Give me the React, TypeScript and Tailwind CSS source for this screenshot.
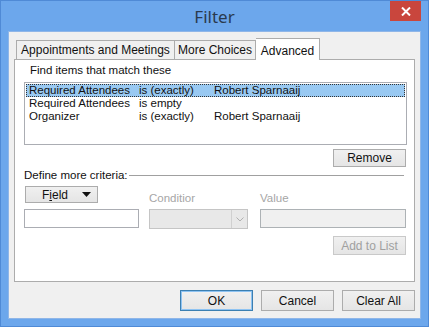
import React from "react";

const font = { fontFamily: '"Liberation Sans", Arial, sans-serif' };

function Btn({ children, className = "", disabled = false, primary = false }: { children: React.ReactNode; className?: string; disabled?: boolean; primary?: boolean }) {
  return (
    <div
      className={
        "flex items-center justify-center border bg-gradient-to-b from-[#f0f0f0] to-[#e5e5e5] text-[12px] leading-none whitespace-nowrap " +
        (primary ? "border-[#3c7fb1] shadow-[inset_0_0_0_1px_#8ec3f2] " : "border-[#acacac] ") +
        (disabled ? "text-[#a0a0a0] border-[#c9c9c9] " : "text-[#111] ") +
        className
      }
    >
      {children}
    </div>
  );
}

export default function App() {
  return (
    <div className="w-[429px] h-[327px] bg-[#6ca7ec] border border-[#4f8ad6] flex flex-col relative overflow-hidden whitespace-nowrap" style={font}>
      <div className="h-[30px] flex items-center justify-center text-[17px] text-[#2a3a4e] pt-[1px]" style={{ fontFamily: '"Noto Sans", sans-serif' }}>Filter</div>
      <div className="absolute right-[7px] top-0 w-[31px] h-[20px] bg-[#c9463d] flex items-center justify-center">
        <svg width="10" height="9" viewBox="0 0 10 9">
          <path d="M1 0.5 L9 8.5 M9 0.5 L1 8.5" stroke="white" strokeWidth="2" />
        </svg>
      </div>
      <div className="mx-[7px] mb-[7px] flex-1 bg-[#f0f0f0] border border-[#8fb6e8] flex flex-col px-[5px]">
        {/* tabs */}
        <div className="flex items-end h-[27px] pl-[2px] pt-[5px] text-[12px] text-[#111]">
          <div className="h-[19px] w-[159px] border border-b-0 border-[#acacac] bg-[#f0f0f0] flex items-center justify-center">Appointments and Meetings</div>
          <div className="h-[19px] w-[81px] border border-b-0 border-l-0 border-[#acacac] bg-[#f0f0f0] flex items-center justify-center">More Choices</div>
          <div className="h-[22px] w-[64px] border border-b-0 border-l-0 border-[#acacac] bg-white flex items-start pt-[3px] justify-center relative -mb-[1px] z-10">Advanced</div>
        </div>
        {/* panel */}
        <div className="h-[223px] bg-white border border-[#acacac] relative flex flex-col text-[11.5px] text-[#111]">
          <div className="pl-[15px] pt-[3px] h-[22px] leading-[14px]">Find items that match these</div>
          <div className="ml-[9px] w-[383px] h-[63px] border border-[#abadb3] px-[1px] pt-[1px] leading-[13px]">
            <div className="flex h-[13px] bg-[#99c9f2] border border-dotted border-[#333] items-center">
              <span className="w-[112px] pl-[2px]">Required Attendees</span>
              <span className="w-[75px]">is (exactly)</span>
              <span>Robert Sparnaaij</span>
            </div>
            <div className="flex h-[13px] items-center px-[1px]">
              <span className="w-[112px] pl-[2px]">Required Attendees</span>
              <span className="w-[75px]">is empty</span>
            </div>
            <div className="flex h-[13px] items-center px-[1px]">
              <span className="w-[112px] pl-[2px]">Organizer</span>
              <span className="w-[75px]">is (exactly)</span>
              <span>Robert Sparnaaij</span>
            </div>
          </div>
          <div className="flex justify-end pr-[8px] mt-[4px]">
            <Btn className="w-[73px] h-[18px]">Remove</Btn>
          </div>
          <div className="flex items-center pl-[9px] pr-[10px] mt-[2px] h-[13px]">
            <span className="leading-none">Define more criteria:</span>
            <div className="flex-1 h-px bg-[#a0a0a0] ml-[1px]" />
          </div>
          <div className="flex mt-[4px] pl-[10px]">
            <Btn className="w-[73px] h-[17px]">
              <span className="ml-[10px]">F<u>i</u>eld</span>
              <svg className="ml-[14px]" width="9" height="5" viewBox="0 0 9 5"><path d="M0 0 H9 L4.5 5 Z" fill="#111" /></svg>
            </Btn>
          </div>
          <div className="flex pl-[9px] mt-[-12px]">
            <div className="w-[125px]" />
            <div className="w-[111px] text-[#a6a6a6] h-[14px] leading-[14px]">Conditior</div>
            <div className="text-[#a6a6a6] h-[14px] leading-[14px]">Value</div>
          </div>
          <div className="flex pl-[9px] mt-[4px] h-[20px]">
            <div className="w-[115px] h-[19px] border border-[#abadb3] bg-white" />
            <div className="ml-[10px] w-[99px] h-[20px] border border-[#c5c5c5] bg-[#e8e8e8] flex justify-end">
              <div className="w-[16px] h-full border-l border-[#d0d0d0] flex items-center justify-center">
                <svg width="8" height="5" viewBox="0 0 8 5"><path d="M0.5 0.5 L4 4 L7.5 0.5" stroke="#b0b0b0" fill="none" /></svg>
              </div>
            </div>
            <div className="ml-[12px] w-[146px] h-[19px] border border-[#adb2b5] bg-[#f0f0f0]" />
          </div>
          <div className="flex justify-end pr-[8px] mt-[7px]">
            <Btn disabled className="w-[73px] h-[19px]">Add to List</Btn>
          </div>
        </div>
        {/* bottom buttons */}
        <div className="flex justify-end gap-[8px] mt-[8px] pr-[0px]">
          <Btn primary className="w-[73px] h-[21px]">OK</Btn>
          <Btn className="w-[73px] h-[21px]">Cancel</Btn>
          <Btn className="w-[73px] h-[21px]">Clear All</Btn>
        </div>
      </div>
    </div>
  );
}
